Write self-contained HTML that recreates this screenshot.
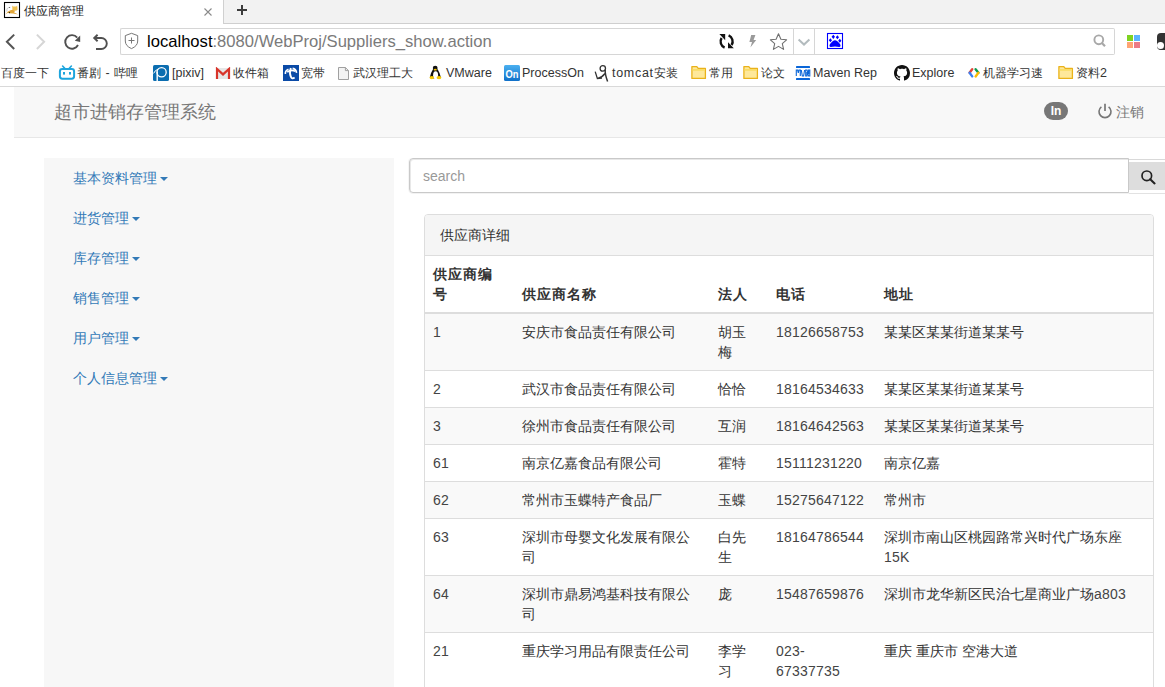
<!DOCTYPE html>
<html><head><meta charset="utf-8">
<style>
*{box-sizing:border-box;margin:0;padding:0}
html,body{width:1165px;height:687px;overflow:hidden;background:#fff;font-family:"Liberation Sans",sans-serif;position:relative}
.a{position:absolute;white-space:nowrap}
/* chrome */
#tabbar{position:absolute;left:0;top:0;width:1165px;height:24px;background:#f2f2f2;border-bottom:1px solid #cfcfcf}
#tab{position:absolute;left:0;top:0;width:224px;height:24px;background:#fff;border-right:1px solid #d0d0d0}
#toolbar{position:absolute;left:0;top:24px;width:1165px;height:36px;background:#fff}
#addr{position:absolute;left:120px;top:28px;width:675px;height:27px;border:1px solid #d6d6d6;border-right:none;border-radius:2px 0 0 2px}
#drop{position:absolute;left:793px;top:28px;width:22px;height:27px;border:1px solid #d6d6d6}
#sbox{position:absolute;left:814px;top:28px;width:301px;height:27px;border:1px solid #d6d6d6;border-left:none;border-radius:0 2px 2px 0}
#bm{position:absolute;left:0;top:60px;width:1165px;height:27px;background:#fff;border-bottom:1px solid #d9d9d9;font-size:12px;color:#333}
#bm span.t{position:absolute;top:5px;line-height:16px}
/* page */
#nav{position:absolute;left:14px;top:87px;width:1151px;height:51px;background:#f8f8f8;border-bottom:1px solid #e7e7e7}
#side{position:absolute;left:44px;top:158px;width:350px;height:529px;background:#f7f7f7}
.mi{position:absolute;left:73px;font-size:14px;color:#337ab7;line-height:20px}
.caret{display:inline-block;width:0;height:0;margin-left:3px;vertical-align:middle;border-top:4px solid #337ab7;border-left:4px solid transparent;border-right:4px solid transparent;position:relative;top:0px}
#sinput{position:absolute;left:409px;top:158px;width:720px;height:35px;border:1px solid #c9c9c9;border-radius:4px 0 0 4px;box-shadow:inset 1px 1px 0 rgba(0,0,0,.09),0 1px 0 rgba(0,0,0,.05),-1px 0 0 rgba(0,0,0,.04)}
#sbtn{position:absolute;left:1129px;top:159px;width:40px;height:35px;background:#ddd;border-top:1px solid #d9d9d9;border-bottom:1px solid #e2e2e2;box-shadow:inset 0 2px 0 #fff,inset 0 -3px 0 #fff}
#panel{position:absolute;left:424px;top:214px;width:730px;height:500px;border:1px solid #ddd;border-radius:4px;background:#fff;overflow:hidden}
#ph{position:absolute;left:0;top:0;width:728px;height:41px;background:#f5f5f5;border-bottom:1px solid #ddd}
table{position:absolute;left:0;top:41px;width:728px;border-collapse:collapse;font-size:14px;color:#333;line-height:20px}
td,th{padding:8px;text-align:left;vertical-align:top;border-top:1px solid #ddd;white-space:nowrap}
th{vertical-align:bottom;border-top:0;border-bottom:2px solid #ddd;font-weight:bold;letter-spacing:.9px}
tbody tr:nth-child(odd){background:#f9f9f9}
.n{letter-spacing:.22px;color:#444}
</style></head><body>

<div id="tabbar"></div>
<div id="tab"></div>
<svg class="a" style="left:0;top:0" width="22" height="20" viewBox="0 0 22 20">
<rect x="4.5" y="2.5" width="15" height="15" fill="#fff" stroke="#000" stroke-width="1.1"/>
<path d="M12.2 5.4 L13.2 6.6 L16.2 6.6 L17.2 5.4 L17.6 9.6 Q16.8 11 14.6 10.8 L12.4 9.8 Z" fill="#f0c050"/>
<path d="M5.6 14.4 Q7.2 11 10.4 10.2 L12.6 9.8 L15 10.8 L14.2 12.6 L18.4 14.6 L13 13.6 L9.4 13.2 L7.8 12.8 Z" fill="#e2a638"/>
<path d="M6.8 11.6 Q6 8 9.2 7.2" fill="none" stroke="#bbb" stroke-width=".7"/>
<circle cx="9.6" cy="7.5" r=".6" fill="#555"/><circle cx="9.4" cy="12.6" r=".7" fill="#222"/>
</svg>
<div class="a" style="left:24px;top:3px;font-size:12px;line-height:16px;color:#222">供应商管理</div>
<svg class="a" style="left:203px;top:7px" width="10" height="10" viewBox="0 0 10 10"><path d="M1.5 1.5 L8.5 8.5 M8.5 1.5 L1.5 8.5" stroke="#8a8a8a" stroke-width="1.1"/></svg>
<svg class="a" style="left:236px;top:4px" width="12" height="12" viewBox="0 0 12 12"><path d="M6 1 V11 M1 6 H11" stroke="#3c3c3c" stroke-width="2"/></svg>
<div id="toolbar"></div>
<svg class="a" style="left:0;top:28px" width="120" height="28" viewBox="0 28 120 28">
<path d="M14.2 34.6 L6.9 41.8 L14.2 49" fill="none" stroke="#555" stroke-width="2"/>
<path d="M36.9 34.6 L44.1 41.8 L36.9 49" fill="none" stroke="#d6d6d6" stroke-width="2"/>
<path d="M77.2 37.6 A6.75 6.75 0 1 0 78 45" fill="none" stroke="#505050" stroke-width="1.9"/>
<path d="M80.2 35.6 L80.2 42 L74.8 40.8 Z" fill="#505050"/>
<path d="M95 38 H101.3 A5.5 5.5 0 0 1 101.3 49 H96" fill="none" stroke="#505050" stroke-width="1.9"/>
<path d="M97.6 34.7 L94.2 38 L97.6 41.3" fill="none" stroke="#505050" stroke-width="1.9"/>
</svg>
<div id="addr"></div>
<svg class="a" style="left:123px;top:32px" width="17" height="18" viewBox="0 0 17 18">
<path d="M8.5 1.3 L14.7 3.6 V9 Q14.7 14 8.5 16.6 Q2.3 14 2.3 9 V3.6 Z" fill="none" stroke="#777" stroke-width="1"/>
<path d="M8.5 5.5 V11.5 M5.5 8.5 H11.5" stroke="#777" stroke-width="1"/>
</svg>
<div class="a" style="left:147px;top:32px;font-size:16.6px;line-height:20px;color:#7a7a7a"><span style="color:#000">localhost</span>:8080/WebProj/Suppliers_show.action</div>
<svg class="a" style="left:716px;top:32px" width="100" height="20" viewBox="716 32 100 20">
<path d="M724.6 47.6 A6.6 6.6 0 0 1 721.6 38" fill="none" stroke="#111" stroke-width="2.4"/>
<path d="M719.4 34 H725.2 V40.2 Z" fill="#111"/>
<path d="M728.6 35.4 A6.6 6.6 0 0 1 731.6 45" fill="none" stroke="#111" stroke-width="2.4"/>
<path d="M733.8 48.2 H728 V42.2 Z" fill="#111"/>
<path d="M751.2 35 H755.4 L753.6 40 H756.2 L750.4 47.4 L752 42 H749.4 Z" fill="#9a9a9a"/>
<path d="M778.5 33.8 L780.9 39.2 L786.6 39.8 L782.3 43.6 L783.6 49.4 L778.5 46.4 L773.4 49.4 L774.7 43.6 L770.4 39.8 L776.1 39.2 Z" fill="none" stroke="#707070" stroke-width="1.1" stroke-linejoin="round"/>
<path d="M798.6 39.6 L804 44.6 L809.4 39.6" fill="none" stroke="#b3bbbe" stroke-width="2"/>
</svg>
<div id="drop"></div>
<div id="sbox"></div>
<svg class="a" style="left:826px;top:32px" width="18" height="18" viewBox="826 32 18 18">
<rect x="827.5" y="33.5" width="15" height="15" fill="#fff" stroke="#0000ff" stroke-width="1.1"/>
<path d="M835 40.2 Q837.2 40.2 840 44 Q841.4 46.6 839.2 47 L835 46.6 L830.8 47 Q828.6 46.6 830 44 Q832.8 40.2 835 40.2 Z" fill="#0000ff"/>
<path d="M833.3 34.8 L835 36.8 L833.3 39 L831.6 36.8 Z M837.4 35.2 L839 37.2 L837.4 39.2 L835.8 37.2 Z M830.4 38.2 L832 40.2 L830.4 42.2 L828.8 40.2 Z M839.8 38.8 L841.4 40.8 L839.8 42.8 L838.2 40.8 Z" fill="#0000ff"/>
</svg>
<svg class="a" style="left:1092px;top:33px" width="16" height="16" viewBox="0 0 16 16">
<circle cx="6.8" cy="6.8" r="4.4" fill="none" stroke="#a8a8a8" stroke-width="1.9"/>
<path d="M9.9 10 L13 13.2" stroke="#a8a8a8" stroke-width="2.2"/>
</svg>
<div class="a" style="left:1127px;top:35px;width:6px;height:6px;background:#7ed321"></div>
<div class="a" style="left:1134px;top:35px;width:6px;height:6px;background:#5cb4ff"></div>
<div class="a" style="left:1127px;top:42px;width:6px;height:6px;background:#ffa474"></div>
<div class="a" style="left:1134px;top:42px;width:6px;height:6px;background:#ec7a86"></div>
<div class="a" style="left:1157px;top:33px;width:16px;height:17px;background:#333;border-radius:4px"></div>
<div class="a" style="left:1157px;top:42px;width:7px;height:7px;background:#fff;border-radius:50%"></div>
<div id="bm">
<span class="t" style="left:1px">百度一下</span>
<svg class="a" style="left:58px;top:4px" width="18" height="18" viewBox="0 0 18 18">
<path d="M4.6 2 L7.2 4.8 M13.4 2 L10.8 4.8" stroke="#1ea5dd" stroke-width="1.6" stroke-linecap="round"/>
<rect x="1.9" y="5.1" width="14.2" height="9.6" rx="2.4" fill="none" stroke="#1ea5dd" stroke-width="2"/>
<rect x="5" y="8" width="2" height="2.6" fill="#1ea5dd"/><rect x="11" y="8" width="2" height="2.6" fill="#1ea5dd"/>
</svg>
<span class="t" style="left:77px">番剧</span><span class="t" style="left:105.5px;font-size:12.5px">-</span><span class="t" style="left:114px">哔哩</span>
<svg class="a" style="left:153px;top:5px" width="16" height="16" viewBox="0 0 16 16">
<rect x="0" y="0" width="16" height="16" rx="1.6" fill="#0b6db0"/>
<circle cx="8.6" cy="7.2" r="4.6" fill="none" stroke="#fff" stroke-width="1.3"/>
<path d="M4.2 6.5 V16" stroke="#fff" stroke-width="1.4"/>
<path d="M0.6 8.4 Q2 5 5.5 4" fill="none" stroke="#fff" stroke-width="1"/>
</svg>
<span class="t" style="left:172px;font-size:12.5px">[pixiv]</span>
<svg class="a" style="left:215px;top:7px" width="16" height="13" viewBox="0 0 16 13">
<rect x="1" y="1" width="14" height="11" fill="#e6e6e6"/>
<path d="M2 12 V2 L8 7.4 L14 2 V12" fill="none" stroke="#d8342a" stroke-width="2.2" stroke-linejoin="miter"/>
</svg>
<span class="t" style="left:233px">收件箱</span>
<svg class="a" style="left:283px;top:5px" width="16" height="16" viewBox="0 0 16 16">
<rect x="0" y="0" width="16" height="16" fill="#0a4aa6"/>
<path d="M2.4 9 Q2 5.5 5.5 4.2 M9.6 3.4 Q13 4 13.6 7.8" fill="none" stroke="#fff" stroke-width="1.6"/>
<path d="M4.2 7.2 Q8 4 12.4 6.4" fill="none" stroke="#fff" stroke-width="1.6"/>
<path d="M7.8 3 Q6.2 8 7.8 11.6 Q9 14.6 11.6 12.6" fill="none" stroke="#fff" stroke-width="1.9"/>
</svg>
<span class="t" style="left:301px">宽带</span>
<svg class="a" style="left:337px;top:6px" width="13" height="15" viewBox="0 0 13 15">
<path d="M1.5 1.5 H8.4 L11.5 4.6 V13.5 H1.5 Z" fill="#f3f3f3" stroke="#a0a0a0" stroke-width="1"/>
<path d="M8.4 1.5 V4.6 H11.5" fill="none" stroke="#a0a0a0" stroke-width="1"/>
</svg>
<span class="t" style="left:353px">武汉理工大</span>
<svg class="a" style="left:428px;top:5px" width="15" height="16" viewBox="0 0 15 16">
<ellipse cx="7.2" cy="3" rx="2.4" ry="2.3" fill="#111"/>
<path d="M5 4.2 Q2.6 8 1.8 12.2 L7.2 14 L12.8 12.2 Q12 8 9.6 4.2 Z" fill="#111"/>
<ellipse cx="7.6" cy="10.2" rx="2.5" ry="3.9" fill="#fff"/>
<ellipse cx="7.3" cy="4.7" rx="1.5" ry=".9" fill="#f5c400"/>
<ellipse cx="3.8" cy="12.6" rx="2.3" ry="1.7" fill="#f5c800"/><ellipse cx="11" cy="12.6" rx="2.4" ry="1.7" fill="#f5c800"/>
</svg>
<span class="t" style="left:446px;font-size:12.5px">VMware</span>
<svg class="a" style="left:504px;top:5px" width="16" height="16" viewBox="0 0 16 16">
<defs><linearGradient id="po" x1="0" y1="0" x2="0" y2="1"><stop offset="0" stop-color="#4ab0f0"/><stop offset="1" stop-color="#1070c8"/></linearGradient></defs>
<rect x="0" y="0" width="16" height="16" rx="1.5" fill="url(#po)"/>
<text x="8" y="12.6" text-anchor="middle" font-family="Liberation Sans" font-weight="bold" font-size="11" fill="#fff" textLength="13" lengthAdjust="spacingAndGlyphs">On</text>
</svg>
<span class="t" style="left:522px;font-size:12.5px">ProcessOn</span>
<svg class="a" style="left:594px;top:5px" width="16" height="17" viewBox="0 0 16 17">
<circle cx="8.8" cy="3.4" r="2.7" fill="none" stroke="#333" stroke-width="1.3"/>
<path d="M11.2 4.6 Q10.8 9 13.6 16.4" fill="none" stroke="#333" stroke-width="1.5"/>
<path d="M1.2 6.6 L3.4 13.6 L8 13.2 M3.6 13.4 Q8 12.5 11 8.5" fill="none" stroke="#333" stroke-width="1.3"/>
</svg>
<span class="t" style="left:612px"><span style="font-size:12.5px;letter-spacing:.7px">tomcat</span>安装</span>
<svg class="a fold" style="left:691px;top:5px" width="16" height="15" viewBox="0 0 16 15"><path d="M.9 1.6 H5.8 L7.2 3.4 H14.4 V13.4 H.9 Z" fill="#fee89a" stroke="#eab21a" stroke-width="1.3" stroke-linejoin="round"/><rect x="1.6" y="4" width="12.2" height="1.8" fill="#f9dc66"/></svg>
<span class="t" style="left:709px">常用</span>
<svg class="a" style="left:743px;top:5px" width="16" height="15" viewBox="0 0 16 15"><path d="M.9 1.6 H5.8 L7.2 3.4 H14.4 V13.4 H.9 Z" fill="#fee89a" stroke="#eab21a" stroke-width="1.3" stroke-linejoin="round"/><rect x="1.6" y="4" width="12.2" height="1.8" fill="#f9dc66"/></svg>
<span class="t" style="left:761px">论文</span>
<svg class="a" style="left:795px;top:5px" width="16" height="16" viewBox="795 65 16 16">
<rect x="796" y="66" width="14" height="2" rx=".6" fill="#0a66d8"/><rect x="796" y="78" width="14" height="2" rx=".6" fill="#0a66d8"/>
<path d="M796.3 76 V70 H797.6 L798.3 73 L799 70 H800.3 V76 M801.3 70 L802.3 76 H803.6 L804.6 70 M805.7 76 V70 H807 L808.6 74 V70 H809.8 V76 H808.6 L807 72 V76 Z" fill="none" stroke="#0a66d8" stroke-width="1.1"/>
</svg>
<span class="t" style="left:813px;font-size:12.5px">Maven Rep</span>
<svg class="a" style="left:894px;top:5px" width="16" height="16" viewBox="0 0 16 16">
<path fill="#111" d="M8 0C3.58 0 0 3.58 0 8c0 3.54 2.29 6.53 5.47 7.59.4.07.55-.17.55-.38 0-.19-.01-.82-.01-1.49-2.01.37-2.53-.49-2.69-.94-.09-.23-.48-.94-.82-1.13-.28-.15-.68-.52-.01-.53.63-.01 1.08.58 1.23.82.72 1.21 1.87.87 2.33.66.07-.52.28-.87.51-1.07-1.78-.2-3.640-.89-3.64-3.95 0-.87.31-1.59.82-2.15-.08-.2-.36-1.02.08-2.12 0 0 .67-.21 2.2.82.64-.18 1.32-.27 2-.27.68 0 1.36.09 2 .27 1.53-1.04 2.2-.82 2.2-.82.44 1.1.16 1.92.08 2.12.51.56.82 1.27.82 2.15 0 3.07-1.87 3.75-3.65 3.95.29.25.54.73.54 1.48 0 1.07-.01 1.930-.01 2.2 0 .21.15.46.55.38A8.013 8.013 0 0016 8c0-4.42-3.58-8-8-8z"/>
</svg>
<span class="t" style="left:912px;font-size:12.5px">Explore</span>
<svg class="a" style="left:966px;top:6px" width="16" height="14" viewBox="966 66 16 14">
<path d="M972.2 69.2 L969.6 72.8" stroke="#e0453a" stroke-width="2.4" stroke-linecap="round"/>
<path d="M969.6 72.8 L972.2 76.4" stroke="#3a80f2" stroke-width="2.4" stroke-linecap="round"/>
<path d="M975.6 69.2 L978.4 72.8" stroke="#109a50" stroke-width="2.4" stroke-linecap="round"/>
<path d="M978.4 72.8 L975.6 76.4" stroke="#fbbc05" stroke-width="2.4" stroke-linecap="round"/>
</svg>
<span class="t" style="left:983px">机器学习速</span>
<svg class="a" style="left:1058px;top:5px" width="16" height="15" viewBox="0 0 16 15"><path d="M.9 1.6 H5.8 L7.2 3.4 H14.4 V13.4 H.9 Z" fill="#fee89a" stroke="#eab21a" stroke-width="1.3" stroke-linejoin="round"/><rect x="1.6" y="4" width="12.2" height="1.8" fill="#f9dc66"/></svg>
<span class="t" style="left:1076px">资料<span style="font-size:12.5px">2</span></span>
</div>
<div id="nav"></div>
<div class="a" style="left:54px;top:102px;font-size:18px;line-height:20px;color:#777">超市进销存管理系统</div>
<div class="a" style="left:1044px;top:102px;width:24px;height:18px;border-radius:9px;background:#777;color:#fff;font-size:12px;font-weight:bold;line-height:18px;text-align:center">In</div>
<svg class="a" style="left:1096px;top:102px" width="18" height="18" viewBox="1096 102 18 18">
<path d="M1101.4 106.8 A6 6 0 1 0 1108.6 106.8" fill="none" stroke="#777" stroke-width="1.6"/>
<path d="M1105 103.8 V111" stroke="#777" stroke-width="1.7"/>
</svg>
<div class="a" style="left:1116px;top:102px;font-size:14px;line-height:20px;color:#777">注销</div>

<div id="side"></div>
<div class="mi" style="top:168px">基本资料管理<span class="caret"></span></div>
<div class="mi" style="top:208px">进货管理<span class="caret"></span></div>
<div class="mi" style="top:248px">库存管理<span class="caret"></span></div>
<div class="mi" style="top:288px">销售管理<span class="caret"></span></div>
<div class="mi" style="top:328px">用户管理<span class="caret"></span></div>
<div class="mi" style="top:368px">个人信息管理<span class="caret"></span></div>

<div id="sinput"></div>
<div class="a" style="left:423px;top:166px;font-size:14px;line-height:20px;color:#999">search</div>
<div id="sbtn"></div>
<svg class="a" style="left:1138px;top:167px" width="20" height="20" viewBox="1138 167 20 20">
<circle cx="1146.8" cy="175.8" r="4.8" fill="none" stroke="#222" stroke-width="1.7"/>
<path d="M1150.2 179.2 L1154.6 183.4" stroke="#222" stroke-width="2.1" stroke-linecap="round"/>
</svg>

<div id="panel">
<div id="ph"><div class="a" style="left:15px;top:10px;font-size:14px;line-height:20px;color:#333">供应商详细</div></div>
<table>
<colgroup><col style="width:89px"><col style="width:196px"><col style="width:58px"><col style="width:108px"><col></colgroup>
<thead><tr><th>供应商编<br>号</th><th>供应商名称</th><th>法人</th><th>电话</th><th>地址</th></tr></thead>
<tbody>
<tr><td class="n">1</td><td>安庆市食品责任有限公司</td><td>胡玉<br>梅</td><td class="n">18126658753</td><td>某某区某某街道某某号</td></tr>
<tr><td class="n">2</td><td>武汉市食品责任有限公司</td><td>恰恰</td><td class="n">18164534633</td><td>某某区某某街道某某号</td></tr>
<tr><td class="n">3</td><td>徐州市食品责任有限公司</td><td>互润</td><td class="n">18164642563</td><td>某某区某某街道某某号</td></tr>
<tr><td class="n">61</td><td>南京亿嘉食品有限公司</td><td>霍特</td><td class="n">15111231220</td><td>南京亿嘉</td></tr>
<tr><td class="n">62</td><td>常州市玉蝶特产食品厂</td><td>玉蝶</td><td class="n">15275647122</td><td>常州市</td></tr>
<tr><td class="n">63</td><td>深圳市母婴文化发展有限公<br>司</td><td>白先<br>生</td><td class="n">18164786544</td><td>深圳市南山区桃园路常兴时代广场东座<br><span class="n">15K</span></td></tr>
<tr><td class="n">64</td><td>深圳市鼎易鸿基科技有限公<br>司</td><td>庞</td><td class="n">15487659876</td><td>深圳市龙华新区民治七星商业广场<span class="n">a803</span></td></tr>
<tr><td class="n">21</td><td>重庆学习用品有限责任公司</td><td>李学<br>习</td><td class="n">023-<br>67337735</td><td>重庆 重庆市 空港大道</td></tr>
</tbody>
</table>
</div>

</body></html>
